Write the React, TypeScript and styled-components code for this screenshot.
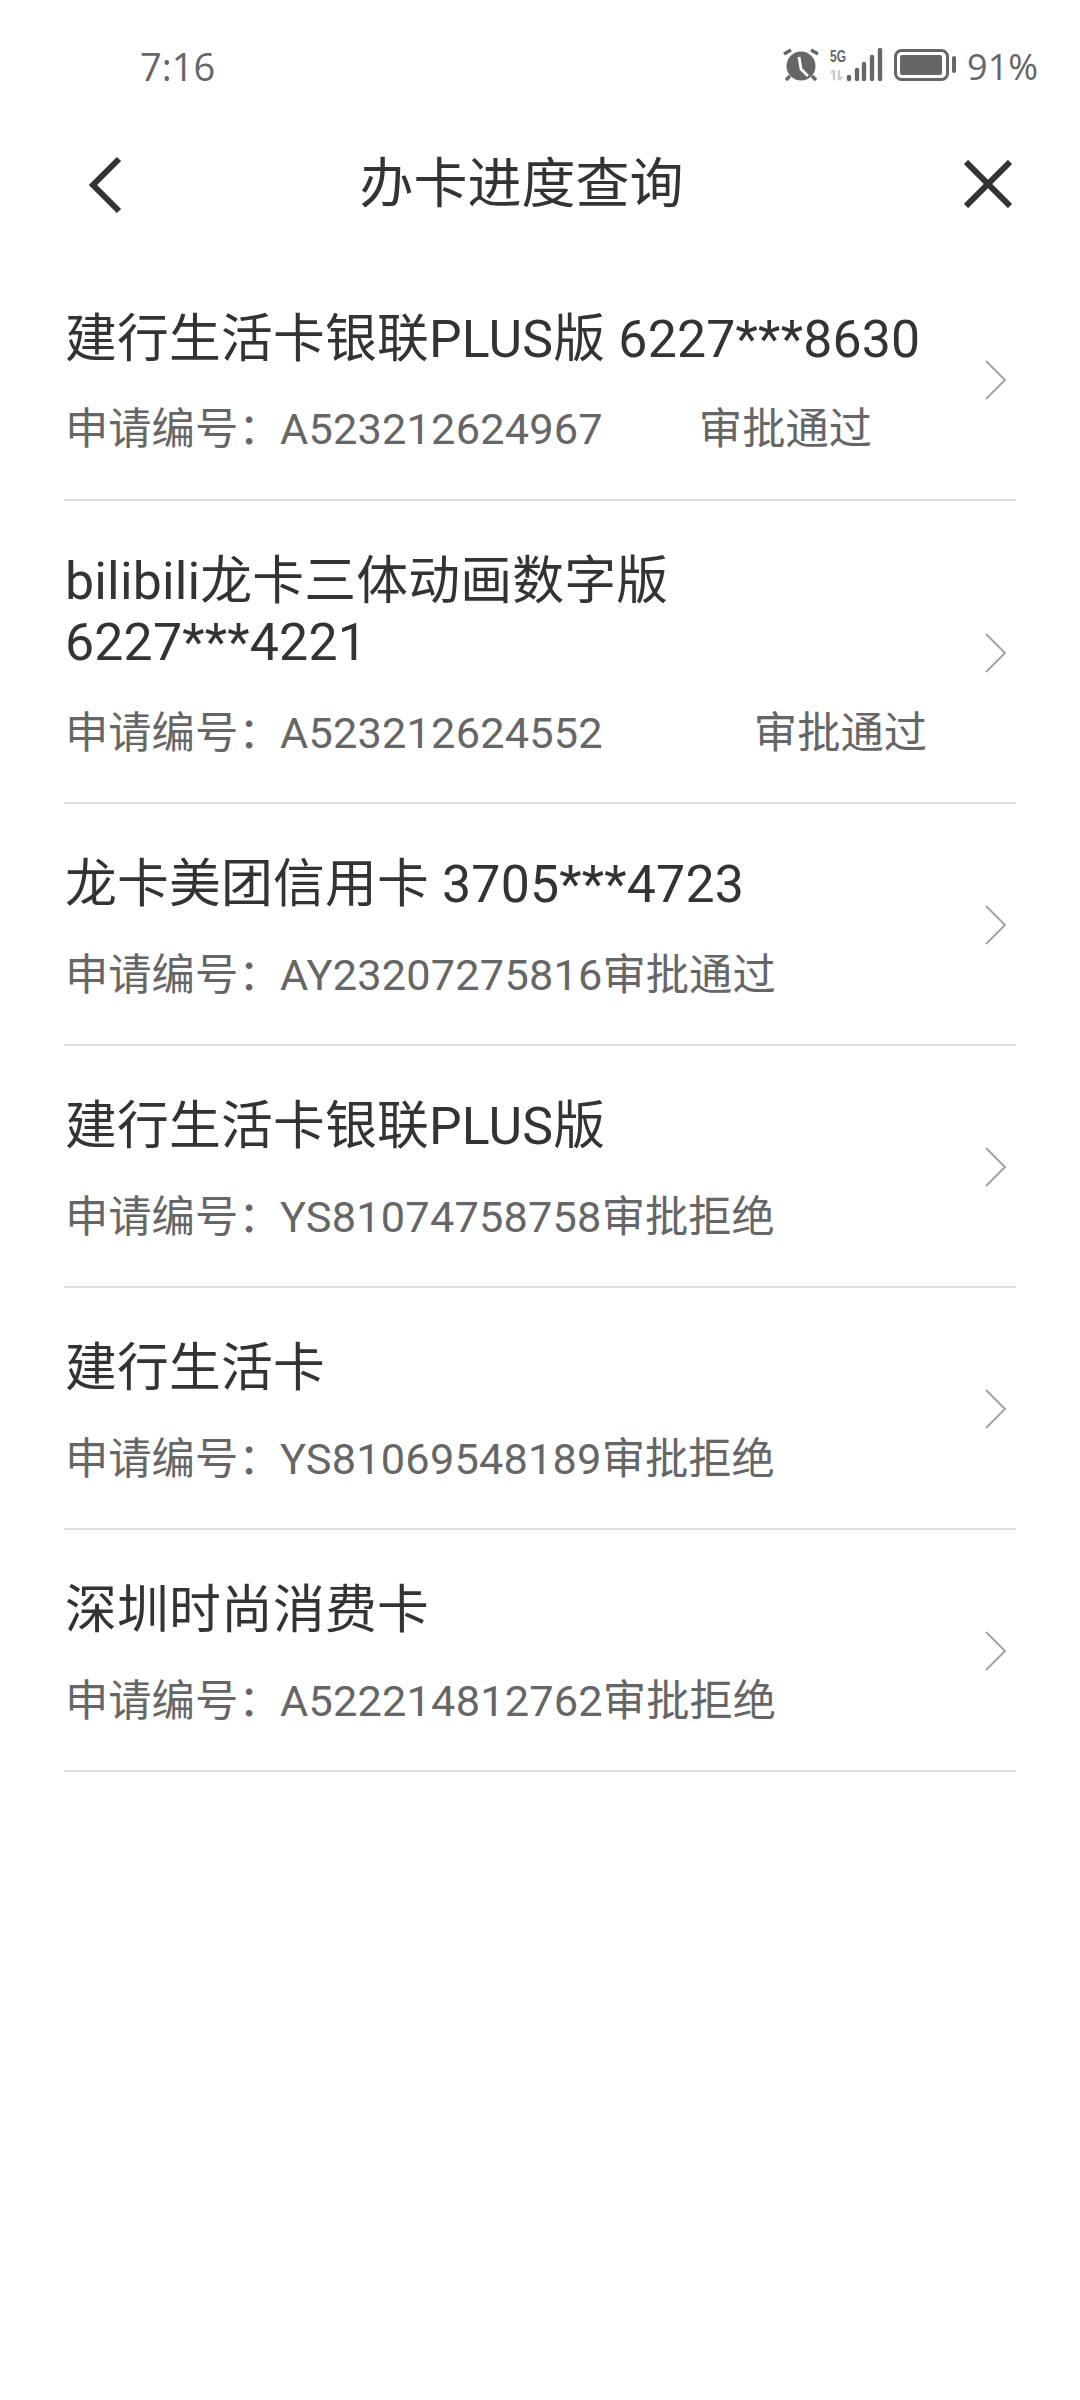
import React from "react"
import styled, { createGlobalStyle } from "styled-components"

const GlobalStyle = createGlobalStyle`
  html, body {
    margin: 0;
    padding: 0;
    background: #ffffff;
  }
  * {
    box-sizing: border-box;
  }
`

type Application = {
  title: string[]
  number: string
  status: string
  statusGap?: number
}

const applications: Application[] = [
  { title: ["建行生活卡银联PLUS版 6227***8630"], number: "A523212624967", status: "审批通过", statusGap: 96 },
  { title: ["bilibili龙卡三体动画数字版", "6227***4221"], number: "A523212624552", status: "审批通过", statusGap: 151 },
  { title: ["龙卡美团信用卡 3705***4723"], number: "AY23207275816", status: "审批通过" },
  { title: ["建行生活卡银联PLUS版"], number: "YS81074758758", status: "审批拒绝" },
  { title: ["建行生活卡"], number: "YS81069548189", status: "审批拒绝" },
  { title: ["深圳时尚消费卡"], number: "A522214812762", status: "审批拒绝" },
]

export default function App() {
  return (
    <Page>
      <GlobalStyle />
      <StatusBar>
        <StatusText $size={38}>7:16</StatusText>
        <StatusIcons>
          <svg width="36" height="34" viewBox="0 0 36 34" fill="#666">
            <circle cx="18" cy="18" r="14.5" />
            <path d="M16 9l2 12 7 7" stroke="#fff" strokeWidth="2.8" fill="none" />
            <path d="M1 6l7-4M35 6l-7-4M7 28l-4 4M29 28l4 4" stroke="#666" strokeWidth="3.4" fill="none" />
          </svg>
          <svg width="53" height="34" viewBox="0 0 53 34">
            <text x="0" y="14" fontFamily="Liberation Sans, sans-serif" fontWeight="700" fontSize="17" fill="#666" textLength="16" lengthAdjust="spacingAndGlyphs">5G</text>
            <path d="M4 22v10M1 25l3-3M9 32V22M9 32l3-3" stroke="#ccc" strokeWidth="2.4" fill="none" />
            <g stroke="#666" strokeWidth="4.4" strokeLinecap="round">
              <path d="M19 29v2M27 22v9M34 16v15M42 9v22M50 2v29" />
            </g>
          </svg>
          <svg width="62" height="32" viewBox="0 0 62 32">
            <rect x="1.5" y="1.5" width="52" height="29" rx="6" fill="none" stroke="#666" strokeWidth="3" />
            <rect x="6" y="6" width="42" height="20" rx="2" fill="#666" />
            <rect x="58" y="7" width="4" height="17" rx="2" fill="#666" />
          </svg>
          <StatusText $size={36}>91%</StatusText>
        </StatusIcons>
      </StatusBar>
      <NavBar>
        <svg width="36" height="58" viewBox="0 0 36 58">
          <path d="M32 3L6 29l26 26" fill="none" stroke="#333" strokeWidth="6" />
        </svg>
        <NavTitle>办卡进度查询</NavTitle>
        <CloseIcon width="48" height="48" viewBox="0 0 48 48">
          <path d="M2 2l44 44M46 2L2 46" fill="none" stroke="#333" strokeWidth="6" />
        </CloseIcon>
      </NavBar>
      <List>
        {applications.map((item) => (
          <Row key={item.number}>
            <RowBody>
              <Title>
                {item.title.map((line) => (
                  <div key={line}>{line}</div>
                ))}
              </Title>
              <Meta>
                <span>申请编号：</span>
                <ApplicationNumber>{item.number}</ApplicationNumber>
                <Status $gap={item.statusGap ?? 0}>{item.status}</Status>
              </Meta>
            </RowBody>
            <Chevron width="24" height="42" viewBox="0 0 24 42">
              <path d="M2 2l19 19L2 40" fill="none" stroke="#a3a3a3" strokeWidth="2" />
            </Chevron>
          </Row>
        ))}
      </List>
    </Page>
  )
}

const Page = styled.div`
  width: 1080px;
  height: 2400px;
  background: #ffffff;
  font-family: Roboto, "Noto Sans CJK SC", sans-serif;
  overflow: hidden;
`
const StatusBar = styled.div`
  display: flex;
  align-items: center;
  justify-content: space-between;
  height: 68px;
  margin-top: 31px;
  padding: 0 42px 0 140px;
  color: #666666;
`
const StatusText = styled.span<{ $size: number }>`
  font-size: ${(p) => p.$size}px;
  font-family: "Open Sans", sans-serif;
  margin-top: 2px;
`
const StatusIcons = styled.div`
  display: flex;
  align-items: center;
  gap: 11px;
`
const NavBar = styled.div`
  display: flex;
  align-items: center;
  justify-content: space-between;
  height: 64px;
  margin-top: 54px;
  padding: 0 68px 0 87px;
`
const NavTitle = styled.div`
  font-size: 54px;
  line-height: 64px;
  color: #333333;
  margin-right: 44px;
`
const CloseIcon = styled.svg`
  margin-bottom: 2px;
`
const List = styled.div`
  margin: 41.5px 16px 0 64px;
  width: 952px;
`
const Row = styled.div`
  display: flex;
  align-items: center;
  justify-content: space-between;
  padding: 50px 8px 37.5px 1px;
  border-bottom: 2px solid #dddddd;
`
const RowBody = styled.div`
  display: flex;
  flex-direction: column;
  gap: 29px;
`
const Title = styled.div`
  font-size: 51.8px;
  line-height: 61.5px;
  letter-spacing: 0.2px;
  color: #333333;
`
const Meta = styled.div`
  display: flex;
  font-size: 43.3px;
  line-height: 62px;
  color: #666666;
`
const ApplicationNumber = styled.span`
  margin-left: -1.5px;
  letter-spacing: 0.2px;
`
const Status = styled.span<{ $gap: number }>`
  margin-left: ${(p) => p.$gap}px;
`
const Chevron = styled.svg`
  margin-bottom: 10px;
`
